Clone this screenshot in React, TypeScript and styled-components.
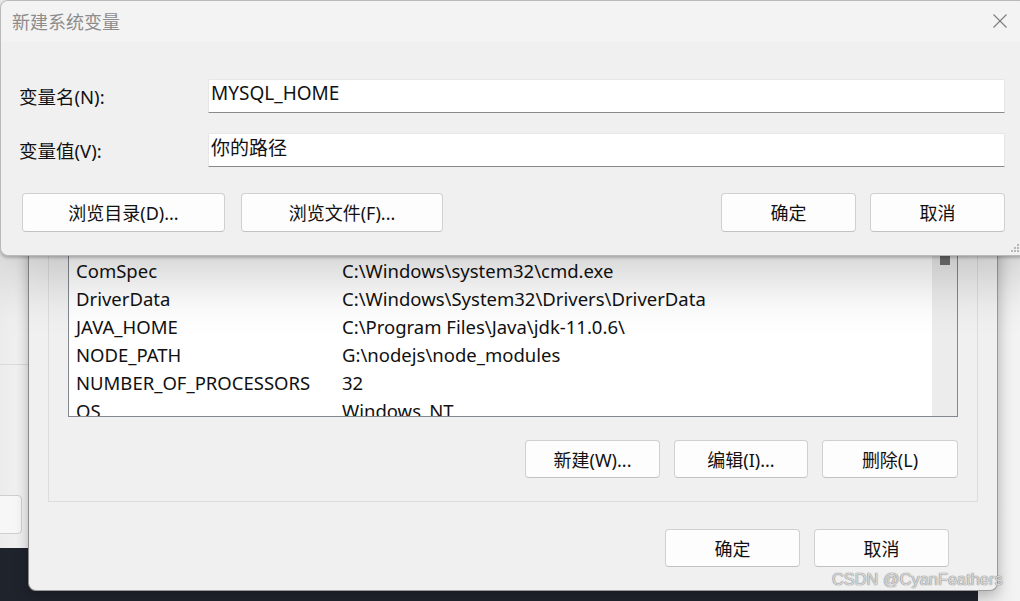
import React from 'react';
import styled, {createGlobalStyle} from "styled-components";

const GlobalStyle = createGlobalStyle`
  html, body {
    margin: 0;
    padding: 0;
    background: #1f232c;
  }
  * {
    box-sizing: border-box;
  }
`

const FONT = `"Noto Sans", "Noto Sans CJK SC", sans-serif`;

const Desktop = styled.div`
  position: relative;
  width: 1020px;
  height: 601px;
  overflow: hidden;
  background: #1f232c;
  font-family: ${FONT};
  color: #111;
`

// window peeking out behind on the left
const LeftWindow = styled.div`
  position: absolute;
  left: 0;
  top: 0;
  width: 40px;
  height: 548px;
  background: linear-gradient(90deg, #ececec 0%, #f2f2f2 60%, #e2e2e2 100%);
  display: flex;
  flex-direction: column;
`

const LeftDivider = styled.div`
  margin-top: 364px;
  height: 1px;
  background: #dadada;
`

const LeftButton = styled.div`
  margin-top: 130px;
  margin-left: -20px;
  width: 42px;
  height: 39px;
  border: 1px solid #cfcfcf;
  border-radius: 4px;
  background: #f7f7f7;
`

// window peeking out behind on the right
const RightWindow = styled.div`
  position: absolute;
  left: 978px;
  top: 0;
  width: 42px;
  height: 601px;
  background: linear-gradient(90deg, #e6e6e6 0%, #f4f4f4 100%);
`

const BackDialog = styled.div`
  position: absolute;
  left: 28px;
  top: 0;
  width: 970px;
  height: 591px;
  background: #f0f0f0;
  border-left: 1.5px solid #8a8a8a;
  border-right: 1.5px solid #9a9a9a;
  border-bottom: 1px solid #9a9a9a;
  border-radius: 0 0 8px 8px;
  box-shadow: 0 4px 14px rgba(0, 0, 0, 0.25);
  padding: 176px 48px 22px 19px;
  display: flex;
  flex-direction: column;
`

const GroupBox = styled.div`
  border: 1px solid #dcdcdc;
  margin-right: -29px;
  padding: 51px 19px 23px 19px;
  display: flex;
  flex-direction: column;
`

const ListBox = styled.div`
  height: 189px;
  border: 1px solid #828790;
  background: #fff;
  display: flex;
  overflow: hidden;
`

const ListRows = styled.div`
  flex: 1;
  display: flex;
  flex-direction: column;
  padding-left: 7px;
`

const ListRow = styled.div`
  height: 28px;
  flex-shrink: 0;
  display: flex;
  align-items: center;
  font-size: 18.5px;
  white-space: nowrap;
  padding-bottom: 1px;
`

const NameCell = styled.span`
  width: 266px;
`

const ScrollTrack = styled.div`
  width: 25px;
  background: #ececec;
  display: flex;
  justify-content: center;
  padding-top: 26px;
`

const ScrollThumb = styled.div`
  width: 10px;
  height: 10px;
  background: #707070;
`

const ButtonRow = styled.div<{$top: number; $gap: number}>`
  display: flex;
  justify-content: flex-end;
  gap: ${p => p.$gap}px;
  margin-top: ${p => p.$top}px;
`

const WinButton = styled.button<{$w: number; $h?: number}>`
  width: ${p => p.$w}px;
  height: ${p => p.$h ?? 38}px;
  border: 1px solid #d0d0d0;
  border-bottom-color: #c2c2c2;
  border-radius: 4px;
  background: #fdfdfd;
  font-family: ${FONT};
  font-size: 18px;
  color: #111;
  padding: 0 0 1px 0;
  display: flex;
  align-items: center;
  justify-content: center;
`

const FrontDialog = styled.div`
  position: absolute;
  left: 0;
  top: 0;
  width: 1040px;
  height: 256px;
  background: #f0f0f0;
  border: 1px solid #b9b9b9;
  border-radius: 8px;
  box-shadow: 0 2px 3px rgba(0, 0, 0, 0.22), 0 20px 60px rgba(0, 0, 0, 0.2);
  display: flex;
  flex-direction: column;
`

const TitleBar = styled.div`
  height: 41px;
  background: #f3f3f3;
  border-radius: 8px 8px 0 0;
  display: flex;
  align-items: center;
  padding: 0 0 2px 11px;
  width: 1020px;
`

const Title = styled.span`
  flex: 1;
  font-size: 18px;
  color: #8c8c8c;
`

const CloseIcon = styled.svg`
  width: 16px;
  height: 16px;
  margin-right: 13px;
  stroke: #7c7c7c;
  stroke-width: 1.1;
  fill: none;
`

const DialogBody = styled.div`
  width: 1020px;
  padding: 37px 16px 0 18px;
  display: flex;
  flex-direction: column;
  gap: 20px;
`

const FieldRow = styled.div`
  display: flex;
  align-items: center;
`

const FieldLabel = styled.label`
  width: 189px;
  font-size: 18.5px;
  padding-bottom: 1px;
`

const TextInput = styled.div`
  flex: 1;
  height: 34px;
  background: #fff;
  border: 1px solid #e6e6e6;
  border-bottom: 1px solid #8a8a8a;
  border-radius: 2px 2px 0 0;
  padding: 0 3px 6px 2px;
  display: flex;
  align-items: center;
  font-size: 19px;
`

const ActionRow = styled.div`
  display: flex;
  gap: 16px;
  margin-top: 6px;
  padding-left: 3px;
`

const Spacer = styled.div`
  flex: 1;
`

const OkGroup = styled.div`
  display: flex;
  gap: 14px;
`

const Grip = styled.svg`
  position: absolute;
  left: 1010px;
  top: 243px;
  width: 10px;
  height: 10px;
  fill: #b8b8b8;
`

const Watermark = styled.div`
  position: absolute;
  left: 832px;
  top: 570px;
  font-family: "Liberation Sans", Arial, sans-serif;
  font-size: 16.4px;
  color: rgba(240, 240, 240, 0.8);
  text-shadow: 0 0 1px #7a7a7a, 0 0 1px #7a7a7a;
`

const vars: [string, string][] = [
  ['ChocolateyInstall', 'C:\\ProgramData\\chocolatey'],
  ['ComSpec', 'C:\\Windows\\system32\\cmd.exe'],
  ['DriverData', 'C:\\Windows\\System32\\Drivers\\DriverData'],
  ['JAVA_HOME', 'C:\\Program Files\\Java\\jdk-11.0.6\\'],
  ['NODE_PATH', 'G:\\nodejs\\node_modules'],
  ['NUMBER_OF_PROCESSORS', '32'],
  ['OS', 'Windows_NT'],
];

const App = () => {
  return (
    <Desktop>
      <GlobalStyle/>
      <LeftWindow>
        <LeftDivider/>
        <LeftButton/>
      </LeftWindow>
      <RightWindow/>

      <BackDialog>
        <GroupBox>
          <ListBox>
            <ListRows>
              {vars.map(([name, value]) => (
                <ListRow key={name}>
                  <NameCell>{name}</NameCell>
                  <span>{value}</span>
                </ListRow>
              ))}
            </ListRows>
            <ScrollTrack>
              <ScrollThumb/>
            </ScrollTrack>
          </ListBox>
          <ButtonRow $top={23} $gap={14}>
            <WinButton $w={135}>新建(W)...</WinButton>
            <WinButton $w={134}>编辑(I)...</WinButton>
            <WinButton $w={136}>删除(L)</WinButton>
          </ButtonRow>
        </GroupBox>
        <ButtonRow $top={27} $gap={14}>
          <WinButton $w={135}>确定</WinButton>
          <WinButton $w={135}>取消</WinButton>
        </ButtonRow>
      </BackDialog>

      <FrontDialog>
        <TitleBar>
          <Title>新建系统变量</Title>
          <CloseIcon viewBox="0 0 16 16">
            <path d="M1.5 1.5 L14.5 14.5 M14.5 1.5 L1.5 14.5"/>
          </CloseIcon>
        </TitleBar>
        <DialogBody>
          <FieldRow>
            <FieldLabel>变量名(N):</FieldLabel>
            <TextInput>MYSQL_HOME</TextInput>
          </FieldRow>
          <FieldRow>
            <FieldLabel>变量值(V):</FieldLabel>
            <TextInput>你的路径</TextInput>
          </FieldRow>
          <ActionRow>
            <WinButton $w={203} $h={39}>浏览目录(D)...</WinButton>
            <WinButton $w={202} $h={39}>浏览文件(F)...</WinButton>
            <Spacer/>
            <OkGroup>
              <WinButton $w={135} $h={39}>确定</WinButton>
              <WinButton $w={135} $h={39}>取消</WinButton>
            </OkGroup>
          </ActionRow>
        </DialogBody>
      </FrontDialog>
      <Grip viewBox="0 0 10 10">
        <rect x="7" y="1" width="2" height="2"/>
        <rect x="4" y="4" width="2" height="2"/>
        <rect x="7" y="4" width="2" height="2"/>
        <rect x="1" y="7" width="2" height="2"/>
        <rect x="4" y="7" width="2" height="2"/>
        <rect x="7" y="7" width="2" height="2"/>
      </Grip>

      <Watermark>CSDN @CyanFeathers</Watermark>
    </Desktop>
  )
}

export default App
